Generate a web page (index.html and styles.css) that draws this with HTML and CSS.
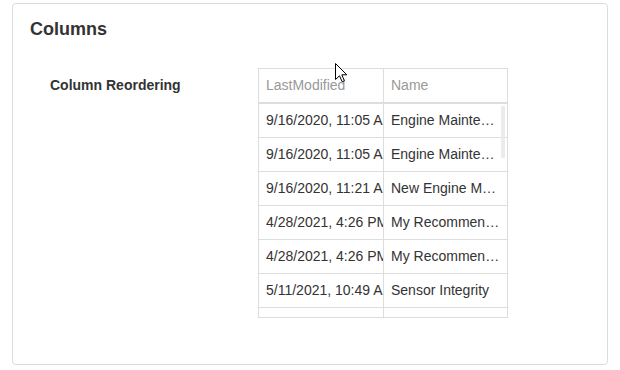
FILE: index.html
```html
<!DOCTYPE html>
<html>
<head>
<meta charset="utf-8">
<link rel="stylesheet" href="styles.css">
</head>
<body>
<div class="page">
  <section class="card">
    <h2 class="card-title">Columns</h2>
    <div class="field">
      <div class="field-label">Column Reordering</div>
      <div class="grid">
        <div class="grid-row grid-head">
          <div class="cell cell-date">LastModified</div>
          <div class="cell cell-name">Name</div>
        </div>
        <div class="grid-row">
          <div class="cell cell-date">9/16/2020, 11:05 AM</div>
          <div class="cell cell-name">Engine Maintenance Overview</div>
        </div>
        <div class="grid-row">
          <div class="cell cell-date">9/16/2020, 11:05 AM</div>
          <div class="cell cell-name">Engine Maintenance Overview</div>
        </div>
        <div class="grid-row">
          <div class="cell cell-date">9/16/2020, 11:21 AM</div>
          <div class="cell cell-name">New Engine Maintenance</div>
        </div>
        <div class="grid-row">
          <div class="cell cell-date">4/28/2021, 4:26 PM</div>
          <div class="cell cell-name">My Recommendations</div>
        </div>
        <div class="grid-row">
          <div class="cell cell-date">4/28/2021, 4:26 PM</div>
          <div class="cell cell-name">My Recommendations</div>
        </div>
        <div class="grid-row">
          <div class="cell cell-date">5/11/2021, 10:49 AM</div>
          <div class="cell cell-name">Sensor Integrity</div>
        </div>
        <div class="grid-row">
          <div class="cell cell-date">6/2/2021, 9:14 AM</div>
          <div class="cell cell-name">Fleet Summary</div>
        </div>
        <div class="scroll-thumb"></div>
      </div>
    </div>
  </section>
</div>
<svg class="cursor" width="13" height="20" viewBox="0 0 13 20">
  <path d="M0.5 0.5 L0.5 16.5 L4.5 12.8 L7.2 18.8 L9.4 17.8 L6.8 11.8 L11.8 11.8 Z" fill="#fff" stroke="#000" stroke-width="1" stroke-linejoin="miter"/>
</svg>
</body>
</html>
```
FILE: styles.css
```css
html, body {
  margin: 0;
  padding: 0;
  background: #fff;
}
body {
  font-family: "Liberation Sans", Arial, sans-serif;
  color: #333;
  position: relative;
  width: 620px;
  height: 370px;
  overflow: hidden;
}
.page {
  padding: 3px 12px 0 12px;
}
.card {
  box-sizing: border-box;
  height: 362px;
  border: 1px solid #dcdcdc;
  border-radius: 4px;
  padding: 14px 17px;
}
.card-title {
  margin: 0;
  font-size: 18px;
  line-height: 22px;
  font-weight: bold;
  color: #333;
}
.field {
  display: flex;
  margin-top: 28px;
  padding-left: 20px;
}
.field-label {
  width: 208px;
  font-size: 14px;
  line-height: 20px;
  font-weight: bold;
  padding-top: 7px;
  color: #333;
}
.grid {
  position: relative;
  box-sizing: border-box;
  width: 250px;
  height: 250px;
  border: 1px solid #dddddd;
  overflow: hidden;
}
.grid-row {
  display: grid;
  grid-template-columns: 125px 123px;
  height: 33px;
  border-bottom: 1px solid #dddddd;
}
.grid-head {
  border-bottom: 2px solid #dddddd;
}
.cell {
  font-size: 14px;
  line-height: 33px;
  white-space: nowrap;
  overflow: hidden;
  color: #333;
}
.grid-head .cell {
  color: #999;
}
.cell-date {
  padding-left: 7px;
  border-right: 1px solid #dddddd;
}
.cell-name {
  padding: 0 5px 0 7px;
  text-overflow: ellipsis;
}
.scroll-thumb {
  position: absolute;
  left: 242px;
  top: 37px;
  width: 4px;
  height: 52px;
  background: #ebebeb;
}
.cursor {
  position: absolute;
  left: 335px;
  top: 63px;
}
```
